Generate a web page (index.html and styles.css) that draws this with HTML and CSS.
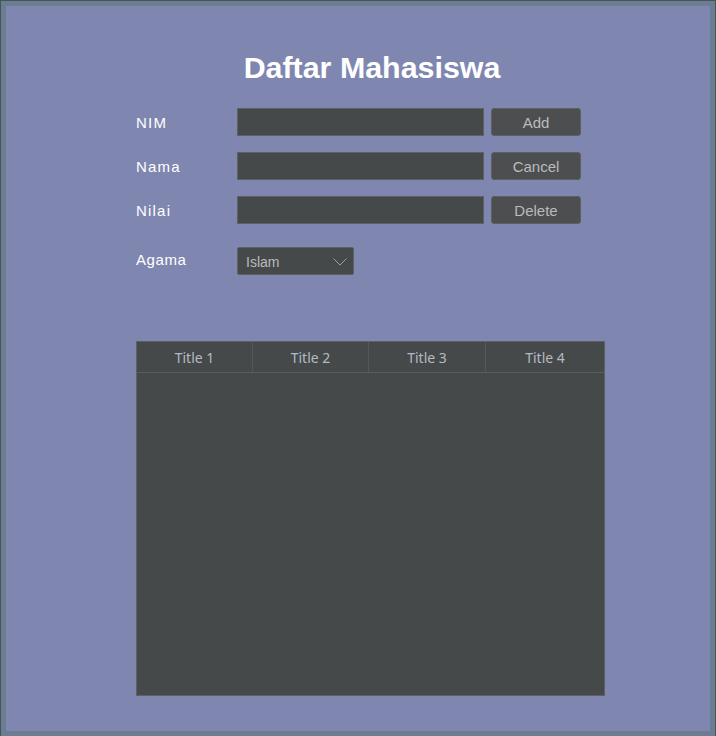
FILE: index.html
```html
<!DOCTYPE html>
<html>
<head>
<meta charset="utf-8">
<link rel="stylesheet" href="styles.css">
</head>
<body>
<div class="window">
  <div class="content">
    <h1 class="title">Daftar Mahasiswa</h1>
    <div class="form">
      <div class="row">
        <span class="label">NIM</span>
        <div class="field"></div>
        <button class="btn">Add</button>
      </div>
      <div class="row">
        <span class="label">Nama</span>
        <div class="field"></div>
        <button class="btn">Cancel</button>
      </div>
      <div class="row">
        <span class="label">Nilai</span>
        <div class="field"></div>
        <button class="btn">Delete</button>
      </div>
      <div class="row row-agama">
        <span class="label">Agama</span>
        <div class="combo">
          <span class="combo-text">Islam</span>
          <svg class="chev" width="14" height="8" viewBox="0 0 14 8"><path d="M0.5 0.5 L7 7 L13.5 0.5" fill="none" stroke="#9c9fa3" stroke-width="1"/></svg>
        </div>
      </div>
    </div>
    <div class="table">
      <div class="thead">
        <div class="th">Title 1</div>
        <div class="th">Title 2</div>
        <div class="th">Title 3</div>
        <div class="th">Title 4</div>
      </div>
      <div class="tbody"></div>
    </div>
  </div>
</div>
</body>
</html>
```
FILE: styles.css
```css
html, body {
  margin: 0;
  padding: 0;
}
body {
  background: #4a5458;
  width: 716px;
  height: 736px;
  overflow: hidden;
}
.window {
  box-sizing: border-box;
  margin: 1px 1px 0 1px;
  width: 714px;
  height: 735px;
  border: 5px solid #6a7d92;
  background: #7f87b1;
  padding-top: 43px;
}
.content {
  margin-left: 130px;
  width: 468px;
}
.title {
  margin: 0;
  font-family: "Liberation Sans", Arial, sans-serif;
  font-weight: bold;
  font-size: 30.4px;
  line-height: 36px;
  color: #ffffff;
  text-align: center;
  padding-left: 4px;
}
.form {
  margin-top: 23px;
  display: flex;
  flex-direction: column;
  gap: 16px;
}
.row {
  display: flex;
  align-items: center;
  height: 28px;
}
.row-agama {
  margin-top: 7px;
}
.label {
  width: 101px;
  font-family: "Liberation Sans", Arial, sans-serif;
  font-size: 15px;
  letter-spacing: 1.2px;
  color: #ffffff;
}
.row-agama .label {
  letter-spacing: 0.6px;
  margin-top: -3px;
}
.field {
  box-sizing: border-box;
  width: 247px;
  height: 28px;
  background: #45494a;
  border: 1px solid #5e6163;
}
.btn {
  box-sizing: border-box;
  margin-left: 7px;
  width: 90px;
  height: 28px;
  background: #4c4e50;
  border: 1px solid #5e6163;
  border-radius: 3px;
  font-family: "Liberation Sans", Arial, sans-serif;
  font-size: 15px;
  color: #bbbbbb;
  padding: 0;
}
.combo {
  box-sizing: border-box;
  width: 117px;
  height: 28px;
  background: #45494a;
  border: 1px solid #5e6163;
  border-radius: 2px;
  display: flex;
  align-items: center;
  justify-content: space-between;
  padding: 0 6px 0 8px;
}
.combo-text {
  font-family: "Liberation Sans", Arial, sans-serif;
  font-size: 14px;
  color: #bbbbbb;
  margin-top: 2px;
}
.chev {
  display: block;
  margin-top: 1px;
}
.table {
  box-sizing: border-box;
  margin-top: 66px;
  width: 469px;
  height: 355px;
  background: #45494a;
  border: 1px solid #5e6163;
  display: flex;
  flex-direction: column;
}
.thead {
  display: grid;
  grid-template-columns: 116px 116px 117px 1fr;
  height: 30px;
  border-bottom: 1px solid #5a5d60;
}
.th {
  display: flex;
  align-items: center;
  justify-content: center;
  font-family: "Noto Sans", "Open Sans", sans-serif;
  font-size: 14px;
  color: #b4bac4;
  border-right: 1px solid #55585b;
}
.th:last-child {
  border-right: none;
}
.tbody {
  flex: 1;
}
```
